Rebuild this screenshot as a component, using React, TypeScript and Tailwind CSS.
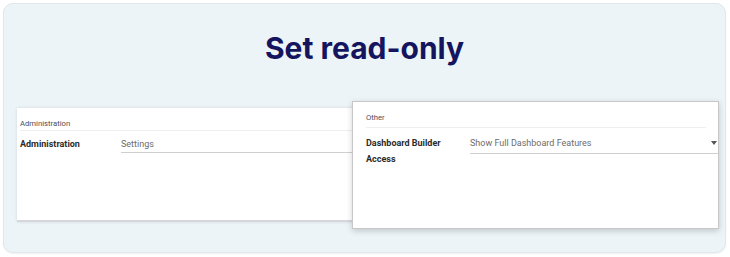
import React from "react";

export default function App() {
  return (
    <div className="w-[730px] h-[257px] bg-white p-[3px]">
      <div className="w-[723px] h-[250px] rounded-[10px] border border-[#e1e7ea] bg-[#ecf4f7] shadow-[0_1px_2px_rgba(0,0,0,0.06)] flex flex-col">
        <h1
          className="pt-[26px] text-center text-[30px] leading-[36px] font-bold text-[#15145f]"
          style={{ fontFamily: "Inter, 'Noto Sans', sans-serif" }}
        >
          Set read-only
        </h1>
        <div
          className="mt-[35px] flex items-start pl-[13px]"
          style={{ fontFamily: "Roboto, 'Liberation Sans', sans-serif" }}
        >
          {/* Left panel */}
          <div className="mt-[7px] w-[360px] h-[114px] shrink-0 bg-white border-b-[2px] border-[#d6d6df] shadow-[0_0_3px_rgba(0,0,0,0.12)] pl-[3px] pt-[11px]">
            <div className="text-[7.7px] leading-[10px] text-[#4d4d57] pb-[1px] border-b border-[#eeeeee]">
              Administration
            </div>
            <div className="flex mt-[6px]">
              <div className="w-[101px] shrink-0 text-[9px] leading-[14px] font-bold text-[#2b2b2b]">
                Administration
              </div>
              <div className="flex-1 text-[9px] leading-[14px] text-[#6c6c6c] border-b border-[#cfcfcf] pb-[1px]">
                Settings
              </div>
            </div>
          </div>
          {/* Right panel, lying over the left one */}
          <div className="relative z-10 -ml-[25px] w-[367px] h-[128px] shrink-0 bg-white border border-[#c7c7c7] shadow-[0_2px_6px_rgba(0,0,0,0.18)] pl-[13px] pt-[11px]">
            <div className="mr-[12px] text-[7.7px] leading-[10px] text-[#4d4d57] pb-[4px] border-b border-[#efefef]">
              Other
            </div>
            <div className="flex mt-[7px]">
              <div className="w-[104px] shrink-0 text-[9px] leading-[16px] font-bold text-[#2b2b2b]">
                Dashboard Builder
                <br />
                Access
              </div>
              <div className="flex-1 h-[19px] flex items-start justify-between text-[9px] leading-[16px] text-[#6c6c6c] border-b border-[#cfcfcf]">
                <span>Show Full Dashboard Features</span>
                <svg width="6" height="4" viewBox="0 0 6 4" className="mt-[6px] mr-[1px]">
                  <path d="M0 0 L6 0 L3 4 Z" fill="#555" />
                </svg>
              </div>
            </div>
          </div>
        </div>
      </div>
    </div>
  );
}
